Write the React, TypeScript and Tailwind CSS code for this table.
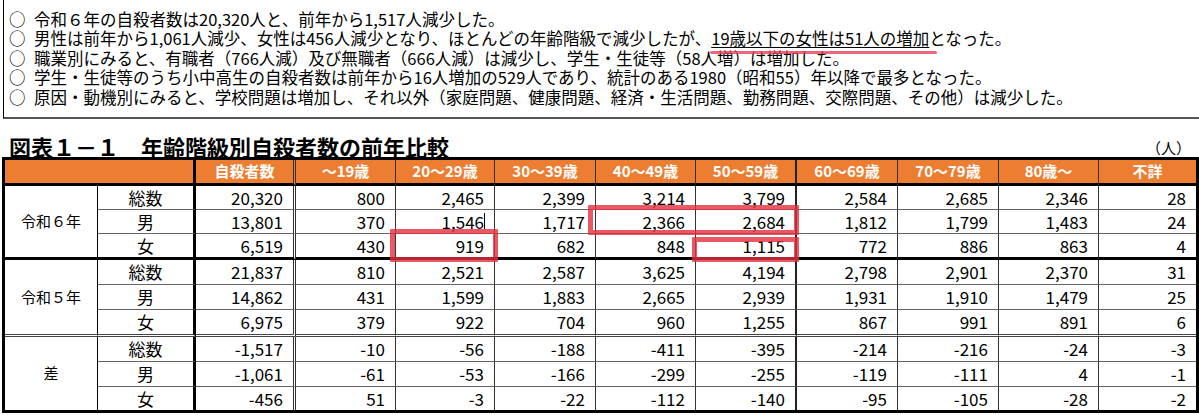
import React from "react";

const colR = [
  "border-r border-r-black",
  "border-r-[3px] border-r-black",
  "border-r-[3px] border-r-[#333] [border-right-style:double]",
  "border-r border-r-[#333]",
  "border-r border-r-[#333]",
  "border-r border-r-[#333]",
  "border-r border-r-[#333]",
  "border-r-2 border-r-[#222]",
  "border-r border-r-[#333]",
  "border-r border-r-[#333]",
  "border-r border-r-[#333]",
  "",
];

const rowB = [
  "border-b-[3px] border-b-black",
  "border-b border-b-[#666]",
  "border-b border-b-[#666]",
  "border-b-[3px] border-b-black",
  "border-b border-b-[#666]",
  "border-b border-b-[#666]",
  "border-b-[3px] border-b-[#444] [border-bottom-style:double]",
  "border-b border-b-[#666]",
  "border-b border-b-[#666]",
  "",
];

const headers = [
  "自殺者数",
  "～19歳",
  "20～29歳",
  "30～39歳",
  "40～49歳",
  "50～59歳",
  "60～69歳",
  "70～79歳",
  "80歳～",
  "不詳",
];

const groups: { label: string; rows: { name: string; vals: string[] }[] }[] = [
  {
    label: "令和６年",
    rows: [
      { name: "総数", vals: ["20,320", "800", "2,465", "2,399", "3,214", "3,799", "2,584", "2,685", "2,346", "28"] },
      { name: "男", vals: ["13,801", "370", "1,546", "1,717", "2,366", "2,684", "1,812", "1,799", "1,483", "24"] },
      { name: "女", vals: ["6,519", "430", "919", "682", "848", "1,115", "772", "886", "863", "4"] },
    ],
  },
  {
    label: "令和５年",
    rows: [
      { name: "総数", vals: ["21,837", "810", "2,521", "2,587", "3,625", "4,194", "2,798", "2,901", "2,370", "31"] },
      { name: "男", vals: ["14,862", "431", "1,599", "1,883", "2,665", "2,939", "1,931", "1,910", "1,479", "25"] },
      { name: "女", vals: ["6,975", "379", "922", "704", "960", "1,255", "867", "991", "891", "6"] },
    ],
  },
  {
    label: "差",
    rows: [
      { name: "総数", vals: ["-1,517", "-10", "-56", "-188", "-411", "-395", "-214", "-216", "-24", "-3"] },
      { name: "男", vals: ["-1,061", "-61", "-53", "-166", "-299", "-255", "-119", "-111", "4", "-1"] },
      { name: "女", vals: ["-456", "51", "-3", "-22", "-112", "-140", "-95", "-105", "-28", "-2"] },
    ],
  },
];

function Bullet({ children }: { children: React.ReactNode }) {
  return (
    <div className="flex h-[19.4px] items-center whitespace-nowrap">
      <span className="w-[25px] shrink-0">○</span>
      <span>{children}</span>
    </div>
  );
}

export default function App() {
  const cells: React.ReactNode[] = [];
  cells.push(
    <div key="h0" className={`col-span-2 bg-[#ED7D31] ${colR[1]} ${rowB[0]}`} />
  );
  headers.forEach((h, i) => {
    cells.push(
      <div
        key={`h${i + 1}`}
        className={`flex items-center justify-center bg-[#ED7D31] text-[15px] font-bold text-white ${colR[i + 2]} ${rowB[0]}`}
      >
        {h}
      </div>
    );
  });
  groups.forEach((g, gi) => {
    const endRow = 1 + gi * 3 + 2;
    g.rows.forEach((r, ri) => {
      const rowIdx = 1 + gi * 3 + ri;
      if (ri === 0) {
        cells.push(
          <div
            key={`l${gi}`}
            className={`row-span-3 flex items-center justify-center text-[15px] ${colR[0]} ${rowB[endRow]}`}
          >
            {g.label}
          </div>
        );
      }
      cells.push(
        <div
          key={`s${gi}${ri}`}
          className={`flex items-center justify-center text-[17px] ${colR[1]} ${rowB[rowIdx]}`}
        >
          {r.name}
        </div>
      );
      r.vals.forEach((v, vi) => {
        cells.push(
          <div
            key={`d${gi}${ri}${vi}`}
            className={`flex items-center justify-end pr-[10px] font-['Liberation_Sans_Narrow','Noto_Sans_CJK_JP',sans-serif] text-[17px] ${colR[vi + 2]} ${rowB[rowIdx]}`}
          >
            {v}
          </div>
        );
      });
    });
  });

  return (
    <div className="h-[415px] w-[1199px] overflow-hidden bg-white font-['Noto_Sans_CJK_JP',sans-serif] text-black">
      <div className="ml-[3px] border-b-2 border-l border-b-[#555] border-l-black pb-[10px] pl-[5px] pt-[10px] text-[16.5px] leading-[19.4px]">
        <Bullet>令和６年の自殺者数は20,320人と、前年から1,517人減少した。</Bullet>
        <Bullet>
          男性は前年から1,061人減少、女性は456人減少となり、ほとんどの年齢階級で減少したが、
          <span className="relative underline decoration-1 underline-offset-2">
            19歳以下の女性は51人の増加
            <span className="absolute bottom-[-4px] left-[-1px] right-[-8px] h-[3px] rounded-full bg-[#e8405a]/80" />
          </span>
          となった。
        </Bullet>
        <Bullet>職業別にみると、有職者（766人減）及び無職者（666人減）は減少し、学生・生徒等（58人増）は増加した。</Bullet>
        <Bullet>学生・生徒等のうち小中高生の自殺者数は前年から16人増加の529人であり、統計のある1980（昭和55）年以降で最多となった。</Bullet>
        <Bullet>原因・動機別にみると、学校問題は増加し、それ以外（家庭問題、健康問題、経済・生活問題、勤務問題、交際問題、その他）は減少した。</Bullet>
      </div>

      <div className="mt-[16px] flex items-end justify-between pr-[8px]">
        <div className="pl-[9px] text-[22px] font-bold leading-[22px]">図表１－１　年齢階級別自殺者数の前年比較</div>
        <div className="text-[15px] leading-[18px]">（人）</div>
      </div>

      <div className="relative ml-[2px] w-[1197px]">
        <div className="grid grid-cols-[93px_98px_100px_100px_99px_101px_100px_101px_101px_101px_100px_97px] grid-rows-[26px_24px_24px_26px_25px_25px_27px_25px_25px_23px] border-[3px] border-black">
          {cells}
        </div>
        <div className="pointer-events-none absolute left-[482px] top-[56px] h-[16px] w-px bg-black" />
        <div className="pointer-events-none absolute left-[388px] top-[72px] h-[33px] w-[108px] rounded-[1px] border-[5px] border-[#e5303c]/80" />
        <div className="pointer-events-none absolute left-[586px] top-[48px] h-[30px] w-[211px] rounded-[1px] border-[5px] border-[#e5303c]/80" />
        <div className="pointer-events-none absolute left-[690px] top-[80px] h-[25px] w-[107px] rounded-[1px] border-[5px] border-[#e5303c]/80" />
      </div>
    </div>
  );
}
